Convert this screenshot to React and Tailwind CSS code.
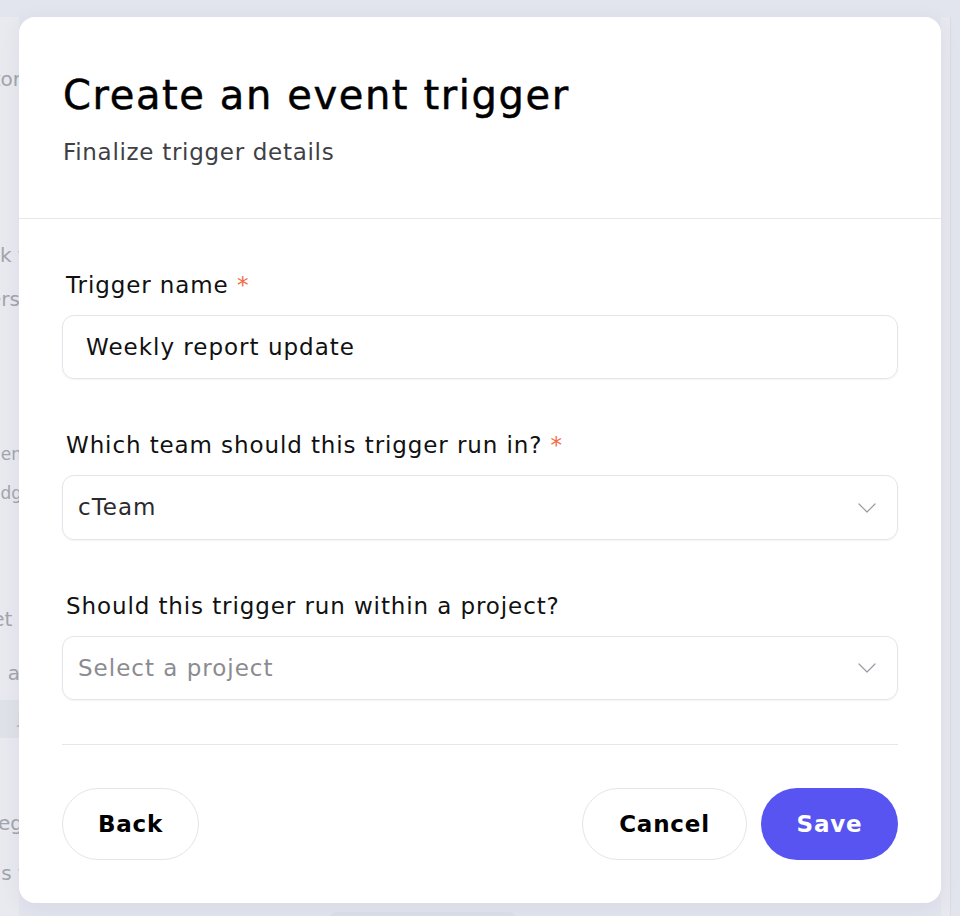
import React from "react";

const font = { fontFamily: "'DejaVu Sans', 'Noto Sans', sans-serif" };

function Chevron() {
  return (
    <svg width="18" height="10" viewBox="0 0 18 10" fill="none" className="shrink-0">
      <path d="M1 1l8 8 8-8" stroke="#9a9ca3" strokeWidth="1.2" strokeLinecap="round" strokeLinejoin="round" />
    </svg>
  );
}

function Frag({ text, className = "" }) {
  return (
    <div className={"flex justify-end whitespace-nowrap overflow-hidden text-[20px] text-[#a3a5ad] " + className}>
      <span>{text}</span>
    </div>
  );
}

export default function App() {
  return (
    <div className="relative w-[960px] h-[916px] overflow-hidden bg-[#e2e5ee] flex" style={font}>
      {/* background page (dimmed) */}
      <div className="mt-[17px] w-[19px] h-[899px] bg-[#e9eaf0] flex flex-col overflow-hidden">
        <Frag text="Monitor" className="mt-[47px] -mr-[2px]" />
        <Frag text="Track f" className="mt-[146px] -mr-[6px]" />
        <Frag text="Users" className="mt-[14px] -mr-[1px]" />
        <Frag text="When" className="mt-[128px] text-[17px]! -mr-[3px]" />
        <Frag text="Badg" className="mt-[13px] text-[17px]! -mr-[3px]" />
        <Frag text="Set r" className="mt-[98px] -mr-[8px]" />
        <Frag text="a" className="mt-[24px] -mr-[1px]" />
        <div className="mt-[12px] h-[38px] w-[30px] rounded-r-lg bg-[#e0e2e9] flex items-center justify-end pr-[8px] text-[15px] text-[#b4b6bd]">J</div>
        <Frag text="Categ" className="mt-[70px] -mr-[4px]" />
        <Frag text="Runs f" className="mt-[20px] -mr-[6px]" />
      </div>
      <div className="flex-1" />
      <div className="mt-[17px] w-[10px] h-[899px] bg-[#e8e9ef] border-r border-[#d9dce5]" />
      <div className="w-[9px]" />
      <div className="absolute left-[330px] top-[912px] w-[185px] h-[10px] rounded-t-md bg-[#dcdfe8]" />

      {/* modal */}
      <div className="absolute left-[19px] top-[17px] w-[922px] h-[886px] bg-white rounded-[16px] shadow-[0_4px_24px_rgba(30,35,60,0.06)] flex flex-col">
        <div className="px-[44px] pt-[54px] pb-[50px] border-b border-[#e6e7eb]">
          <h1 className="text-[40px] leading-[48px] font-normal tracking-[1.6px] text-black [-webkit-text-stroke:0.5px_black]">Create an event trigger</h1>
          <p className="mt-[17px] text-[23px] leading-[32px] tracking-[0.7px] text-[#3f3f46]">Finalize trigger details</p>
        </div>
        <div className="px-[43px] pt-[50px] flex flex-col">
          <label className="pl-[4px] text-[23px] leading-[32px] tracking-[0.9px] text-[#111]">
            Trigger name <span className="text-[#f26b46]">*</span>
          </label>
          <div className="mt-[14px] h-[64px] rounded-[12px] border border-[#e4e5ea] shadow-[0_1px_2px_rgba(0,0,0,0.05)] flex items-center pl-[23px] text-[23px] tracking-[1px] text-[#111]">
            Weekly report update
          </div>

          <label className="mt-[50px] pl-[4px] text-[23px] leading-[32px] tracking-[0.9px] text-[#111]">
            Which team should this trigger run in? <span className="text-[#f26b46]">*</span>
          </label>
          <div className="mt-[14px] h-[65px] rounded-[12px] border border-[#e4e5ea] shadow-[0_1px_2px_rgba(0,0,0,0.05)] flex items-center justify-between pl-[15px] pr-[21px] text-[23px] tracking-[1px] text-[#2a2a2e]">
            <span>cTeam</span>
            <Chevron />
          </div>

          <label className="mt-[50px] pl-[4px] text-[23px] leading-[32px] tracking-[0.9px] text-[#111]">
            Should this trigger run within a project?
          </label>
          <div className="mt-[14px] h-[64px] rounded-[12px] border border-[#e4e5ea] shadow-[0_1px_2px_rgba(0,0,0,0.05)] flex items-center justify-between pl-[15px] pr-[21px] text-[23px] tracking-[1px] text-[#8b8b90]">
            <span>Select a project</span>
            <Chevron />
          </div>

          <div className="mt-[44px] border-t border-[#e6e7eb]" />

          <div className="mt-[43px] flex items-center">
            <button className="h-[72px] w-[137px] rounded-full border border-[#e4e5ea] bg-white text-[23px] tracking-[0.8px] font-bold text-black">Back</button>
            <div className="flex-1" />
            <button className="h-[72px] w-[165px] rounded-full border border-[#e4e5ea] bg-white text-[23px] tracking-[0.8px] font-bold text-black">Cancel</button>
            <button className="ml-[14px] h-[72px] w-[137px] rounded-full bg-[#5754f2] text-[23px] tracking-[0.8px] font-bold text-white">Save</button>
          </div>
        </div>
      </div>
    </div>
  );
}
